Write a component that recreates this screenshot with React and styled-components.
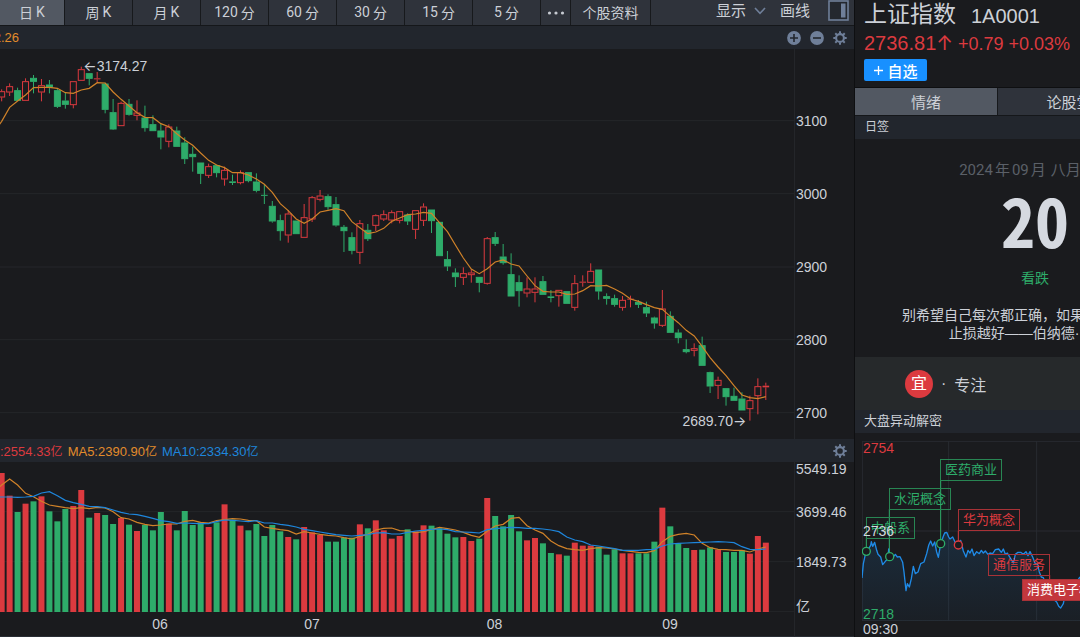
import React from "react";
import styled, { createGlobalStyle } from "styled-components";

const STEP = 23.88;
const START = 5;

// direction, high, body top, body bottom, low, volume top
const candles = [
  ["up", 118, 124, 142, 154, 114],
  ["up", 100, 109, 127, 138, 182],
  ["down", 113, 121, 152, 152, 231],
  ["up", 85, 94, 152, 152, 206],
  ["down", 75, 84, 95, 130, 199],
  ["up", 87, 106, 127, 154, 184],
  ["down", 90, 104, 112, 130, 229],
  ["down", 115, 121, 170, 174, 259],
  ["down", 127, 152, 164, 176, 222],
  ["up", 94, 94, 165, 175, 213],
  ["up", 50, 58, 92, 92, 165],
  ["down", 70, 70, 86, 106, 248],
  ["up", 66, 85, 88, 98, 234],
  ["down", 98, 101, 179, 190, 240],
  ["down", 147, 187, 238, 240, 267],
  ["up", 155, 159, 228, 228, 249],
  ["down", 147, 162, 194, 197, 269],
  ["up", 151, 188, 197, 211, 288],
  ["down", 167, 203, 234, 245, 270],
  ["down", 196, 223, 243, 243, 286],
  ["down", 222, 242, 262, 298, 231],
  ["up", 223, 230, 275, 292, 266],
  ["down", 230, 242, 290, 290, 286],
  ["down", 262, 278, 327, 342, 228],
  ["down", 290, 312, 321, 365, 270],
  ["down", 338, 338, 371, 402, 262],
  ["up", 341, 349, 377, 384, 276],
  ["down", 344, 346, 369, 382, 262],
  ["up", 350, 360, 388, 407, 208],
  ["down", 374, 394, 399, 405, 254],
  ["up", 361, 367, 399, 403, 272],
  ["down", 367, 367, 393, 397, 286],
  ["down", 370, 395, 422, 427, 267],
  ["down", 405, 435, 437, 462, 303],
  ["down", 453, 468, 514, 518, 270],
  ["down", 494, 511, 543, 572, 289],
  ["up", 480, 491, 556, 578, 306],
  ["down", 512, 512, 552, 552, 313],
  ["up", 462, 502, 563, 563, 276],
  ["up", 438, 442, 508, 516, 292],
  ["up", 420, 437, 449, 454, 300],
  ["down", 433, 439, 471, 479, 320],
  ["down", 441, 463, 526, 530, 320],
  ["down", 525, 531, 543, 606, 308],
  ["down", 547, 562, 602, 613, 308],
  ["up", 510, 520, 608, 642, 268],
  ["down", 522, 540, 567, 573, 280],
  ["up", 493, 496, 527, 543, 256],
  ["up", 481, 493, 508, 513, 286],
  ["up", 481, 487, 511, 520, 311],
  ["up", 484, 484, 512, 520, 303],
  ["down", 490, 494, 514, 525, 283],
  ["up", 481, 481, 539, 567, 289],
  ["up", 460, 470, 512, 528, 271],
  ["down", 479, 479, 513, 549, 272],
  ["down", 516, 516, 618, 618, 280],
  ["down", 603, 628, 649, 663, 296],
  ["down", 655, 668, 681, 711, 307],
  ["up", 652, 670, 683, 705, 306],
  ["up", 658, 668, 675, 698, 318],
  ["down", 681, 681, 698, 727, 311],
  ["up", 561, 565, 701, 704, 189],
  ["down", 546, 562, 581, 588, 243],
  ["down", 582, 620, 639, 644, 274],
  ["down", 610, 673, 739, 739, 240],
  ["down", 676, 697, 723, 770, 289],
  ["up", 682, 716, 730, 742, 316],
  ["up", 682, 716, 728, 757, 309],
  ["down", 678, 694, 734, 734, 325],
  ["down", 720, 739, 744, 757, 354],
  ["up", 720, 720, 738, 770, 358],
  ["down", 724, 724, 761, 761, 362],
  ["up", 675, 700, 773, 782, 323],
  ["up", 676, 695, 698, 710, 332],
  ["up", 640, 663, 698, 698, 332],
  ["down", 659, 659, 724, 749, 335],
  ["down", 730, 739, 746, 764, 359],
  ["down", 734, 745, 764, 770, 343],
  ["up", 738, 750, 773, 782, 355],
  ["up", 737, 746, 749, 772, 355],
  ["down", 750, 756, 764, 774, 355],
  ["down", 755, 772, 790, 801, 355],
  ["down", 800, 803, 820, 836, 320],
  ["up", 720, 776, 827, 831, 218],
  ["down", 784, 798, 848, 848, 274],
  ["down", 838, 848, 864, 880, 325],
  ["down", 868, 898, 906, 910, 339],
  ["up", 880, 895, 902, 919, 345],
  ["down", 860, 886, 947, 947, 344],
  ["down", 965, 967, 1009, 1029, 337],
  ["up", 980, 990, 1007, 1047, 344],
  ["down", 1015, 1015, 1041, 1067, 351],
  ["down", 1013, 1038, 1052, 1052, 351],
  ["down", 1027, 1046, 1081, 1081, 346],
  ["up", 1037, 1051, 1077, 1112, 356],
  ["up", 985, 1009, 1038, 1093, 303],
  ["up", 998, 1007, 1012, 1050, 323],
];

const priceAverage = [
  214, 172, 153, 135, 113, 112, 112, 115, 128, 130, 120, 115, 98, 99, 126, 148,
  168, 188, 202, 203, 221, 230, 251, 270, 286, 309, 331, 345, 353, 368, 368,
  375, 387, 403, 427, 461, 482, 507, 520, 507, 486, 481, 476, 482, 515, 533,
  551, 546, 535, 514, 504, 494, 492, 487, 490, 518, 545, 585, 624, 657, 671,
  656, 636, 630, 642, 648, 678, 707, 724, 726, 726, 733, 732, 722, 707, 708,
  706, 717, 730, 747, 754, 764, 773, 778, 799, 818, 841, 858, 889, 923, 951,
  977, 1007, 1035, 1043, 1046, 1040,
];

const volumeFive = [
  150, 132, 150, 175, 185, 199, 210, 214, 218, 221, 218, 221, 217, 219, 230,
  248, 252, 262, 268, 272, 270, 267, 267, 259, 256, 262, 264, 257, 254, 251,
  252, 256, 257, 276, 280, 284, 287, 297, 290, 294, 298, 301, 303, 308, 312,
  304, 298, 285, 280, 279, 287, 288, 293, 290, 284, 277, 281, 285, 292, 301,
  307, 289, 273, 268, 250, 247, 272, 285, 295, 318, 332, 341, 344, 346, 341,
  338, 339, 342, 346, 349, 352, 353, 347, 320, 304, 298, 295, 300, 325, 338,
  343, 344, 346, 346, 351, 342, 336,
];

const volumeTen = [
  186, 186, 187, 186, 184, 174, 170, 182, 196, 203, 208, 214, 215, 218, 225,
  232, 237, 239, 244, 250, 257, 260, 265, 264, 265, 266, 266, 260, 255, 256,
  258, 260, 257, 264, 264, 268, 271, 276, 283, 287, 291, 295, 299, 301, 303,
  301, 299, 294, 293, 297, 297, 292, 288, 286, 283, 282, 284, 290, 291, 292,
  294, 284, 281, 279, 277, 278, 280, 280, 282, 285, 290, 306, 315, 320, 330,
  333, 337, 341, 346, 346, 346, 344, 343, 333, 327, 325, 324, 323, 322, 321,
  320, 321, 323, 335, 343, 344, 342,
];

const intraday =
  "36,443 40,400 46,372 49,362 56,355 62,345 64,334 68,348 74,336 80,360 84,372 92,380 98,403 106,393 114,385 116,356 120,378 128,382 136,372 142,380 150,379 158,396 162,425 168,481 172,460 178,470 184,445 190,408 196,430 204,425 212,400 222,395 230,370 236,345 242,332 248,347 254,335 260,365 265,381 270,352 272,340 280,318 284,308 290,306 296,320 300,326 308,320 314,333 320,343 325,344 332,330 340,362 348,380 354,360 360,368 366,356 372,376 380,364 388,370 394,360 400,368 406,362 414,372 420,368 428,370 436,358 446,356 454,366 460,356 466,372 472,368 478,378 490,398 496,372 504,366 512,366 520,372 528,364 534,376 540,364 548,380 556,400 562,400 568,425 574,440 580,442 590,470 600,495 612,508 620,515 626,528 632,533 640,520 644,500 650,495 656,498 662,470 665,460 672,466 690,440";

const periods = [
  ["日", "K"],
  ["周", "K"],
  ["月", "K"],
  ["120", "分"],
  ["60", "分"],
  ["30", "分"],
  ["15", "分"],
  ["5", "分"],
];

const colors = {
  up: "#dc3a3f",
  down: "#2eac6a",
  orange: "#d08229",
  blue: "#1e86dc",
  grid: "#24262a",
  icon: "#6f7f99",
};

const tagBorders = {
  up: "#a83237",
  down: "#288653",
};

const xAt = (i) => START + STEP * i;

const toPoints = (values) =>
  values.map((value, i) => `${xAt(i).toFixed(1)},${value}`).join(" ");

const Gear = () => (
  <svg width="14" height="14" viewBox="0 0 14 14" aria-hidden="true">
    <g stroke={colors.icon} fill="none">
      <circle cx="7" cy="7" r="3.9" strokeWidth="2.1" />
      {[0, 45, 90, 135, 180, 225, 270, 315].map((angle) => (
        <path
          key={angle}
          d="M7 0.3V2.6"
          strokeWidth="2"
          transform={`rotate(${angle} 7 7)`}
        />
      ))}
    </g>
  </svg>
);

const Round = ({ plus }) => (
  <svg width="14" height="14" viewBox="0 0 14 14" aria-hidden="true">
    <circle cx="7" cy="7" r="6.9" fill={colors.icon} />
    <path
      d={plus ? "M3 7H11M7 3V11" : "M3 7H11"}
      stroke="#22262d"
      strokeWidth="1.6"
    />
  </svg>
);

const Toolbar = () => (
  <ToolbarRow>
    {periods.map(([first, second], i) => (
      <PeriodButton key={first} $active={i === 0}>
        <span>{first}</span>
        <span>{second}</span>
      </PeriodButton>
    ))}
    <MoreButton aria-label="更多">
      <svg width="18" height="4" viewBox="0 0 18 4">
        <g fill="#c6cad1">
          <circle cx="2.5" cy="2" r="1.6" />
          <circle cx="9" cy="2" r="1.6" />
          <circle cx="15.5" cy="2" r="1.6" />
        </g>
      </svg>
    </MoreButton>
    <InfoButton>个股资料</InfoButton>
    <Tools>
      <ToolButton>
        显示
        <svg width="12" height="8" viewBox="0 0 12 8">
          <path
            d="M1 1L6 6.4L11 1"
            fill="none"
            stroke={colors.icon}
            strokeWidth="1.6"
          />
        </svg>
      </ToolButton>
      <ToolButton>画线</ToolButton>
      <ToolButton aria-label="侧栏">
        <svg width="21" height="21" viewBox="0 0 21 21">
          <rect
            x="1"
            y="1"
            width="19"
            height="19"
            fill="#24282f"
            stroke={colors.icon}
            strokeWidth="1.6"
          />
          <rect x="13" y="3.5" width="4.5" height="14" fill={colors.icon} />
        </svg>
      </ToolButton>
    </Tools>
  </ToolbarRow>
);

const PriceChart = () => (
  <PlotRow>
    <PlotArea>
      <PlotSvg viewBox="0 -3 2382 1170" preserveAspectRatio="none" $height={390}>
        {[212, 431, 651, 869, 1088].map((y) => (
          <path key={y} d={`M0 ${y}H2382`} stroke={colors.grid} strokeWidth="3" />
        ))}
        {candles.map(([dir, high, top, bottom, low], i) => {
          const x = xAt(i);
          const color = colors[dir];
          const tall = bottom - top > 5;
          return (
            <g key={i} stroke={color} strokeWidth="3">
              <path d={`M${x} ${high}V${top}M${x} ${bottom}V${low}`} />
              {tall ? (
                <rect
                  x={x - 9}
                  y={top + 1}
                  width="18"
                  height={bottom - top - 2}
                  fill={dir === "up" ? "none" : color}
                />
              ) : (
                <path
                  d={`M${x - 10} ${(top + bottom) / 2}H${x + 10}`}
                  strokeWidth={Math.max(3, bottom - top)}
                />
              )}
            </g>
          );
        })}
        <polyline
          points={`-20,250 ${toPoints(priceAverage)}`}
          fill="none"
          stroke={colors.orange}
          strokeWidth="3.6"
        />
      </PlotSvg>
      <HighMark>
        <i>←</i>3174.27
      </HighMark>
      <LowMark>
        2689.70<i>→</i>
      </LowMark>
    </PlotArea>
    <PriceAxis>
      {[3100, 3000, 2900, 2800, 2700].map((price) => (
        <span key={price}>{price}</span>
      ))}
    </PriceAxis>
  </PlotRow>
);

const VolumeChart = () => (
  <PlotRow>
    <PlotArea>
      <PlotSvg viewBox="0 81 2382 450" preserveAspectRatio="none" $height={150}>
        {[230, 380, 530].map((y) => (
          <path key={y} d={`M0 ${y}H2382`} stroke={colors.grid} strokeWidth="3" />
        ))}
        {candles.map((candle, i) => (
          <rect
            key={i}
            x={xAt(i) - 9}
            y={candle[5]}
            width="18"
            height={531 - candle[5]}
            fill={colors[candle[0]]}
          />
        ))}
        <polyline
          points={`-20,172 ${toPoints(volumeFive)}`}
          fill="none"
          stroke={colors.orange}
          strokeWidth="3.6"
        />
        <polyline
          points={`-20,186 ${toPoints(volumeTen)}`}
          fill="none"
          stroke={colors.blue}
          strokeWidth="3.6"
        />
      </PlotSvg>
      <Months>
        <span />
        <span>06</span>
        <span>07</span>
        <span>08</span>
        <span>09</span>
      </Months>
    </PlotArea>
    <VolumeAxis>
      <span>5549.19</span>
      <span>3699.46</span>
      <span>1849.73</span>
      <span>亿</span>
    </VolumeAxis>
  </PlotRow>
);

const Intraday = () => (
  <IntradayBox>
    <IntradaySvg viewBox="36 32 654 540">
      <defs>
        <linearGradient id="fade" x1="0" y1="0" x2="0" y2="1">
          <stop offset="0" stopColor="#1e86dc" stopOpacity="0.16" />
          <stop offset="1" stopColor="#1e86dc" stopOpacity="0.04" />
        </linearGradient>
      </defs>
      <path
        d="M36 33H690M36 302H690M36 571H690M37 32V572M296 32V572M560 32V572"
        stroke="#282b31"
        strokeWidth="3"
      />
      <polygon points={`36,572 ${intraday} 690,572`} fill="url(#fade)" />
      <polyline
        points={intraday}
        fill="none"
        stroke="#1f8ae6"
        strokeWidth="4"
        strokeLinejoin="round"
      />
      <g stroke={colors.down} strokeWidth="4" fill="#1a1b1e">
        <path d="M49 322V352M118 236V367M272 152V328" strokeWidth="3" />
        <circle cx="49" cy="363" r="12" />
        <circle cx="119" cy="379" r="12" />
        <circle cx="272" cy="340" r="12" />
      </g>
      <g stroke={colors.up} strokeWidth="4" fill="#1a1b1e">
        <path d="M325 301V332M599 434V447" strokeWidth="3" />
        <circle cx="325" cy="344" r="12" />
      </g>
    </IntradaySvg>
    <Tag $x={4} $y={76} $tone="down">中船系</Tag>
    <Tag $x={27} $y={47} $tone="down">水泥概念</Tag>
    <Tag $x={78} $y={18} $tone="down">医药商业</Tag>
    <Tag $x={96} $y={68} $tone="up">华为概念</Tag>
    <Tag $x={126} $y={113} $tone="up">通信服务</Tag>
    <Tag $x={160} $y={138} $tone="up" $filled>消费电子概念</Tag>
    <Levels>
      <Level $color={colors.up}>2754</Level>
      <Level $color="#d3d7de">2736</Level>
      <Level $color={colors.down}>2718</Level>
    </Levels>
    <Clock>09:30</Clock>
  </IntradayBox>
);

const App = () => {
  return (
    <>
      <GlobalStyle />
      <Page>
        <Main>
          <Toolbar />
          <Strip>
            <Clip>2.26</Clip>
            <StripIcons>
              <IconButton aria-label="放大">
                <Round plus />
              </IconButton>
              <IconButton aria-label="缩小">
                <Round />
              </IconButton>
              <IconButton aria-label="设置">
                <Gear />
              </IconButton>
            </StripIcons>
          </Strip>
          <PriceChart />
          <Strip>
            <Legend>
              <Figure $color={colors.up}>
                :2554.33<small>亿</small>
              </Figure>
              <Figure $color="#e28c2b">
                MA5:2390.90<small>亿</small>
              </Figure>
              <Figure $color={colors.blue}>
                MA10:2334.30<small>亿</small>
              </Figure>
            </Legend>
            <StripIcons>
              <IconButton aria-label="设置">
                <Gear />
              </IconButton>
            </StripIcons>
          </Strip>
          <VolumeChart />
        </Main>
        <Side>
          <SideInner>
            <StockHead>
              <h1>
                上证指数 <span>1A0001</span>
              </h1>
              <Quote>
                <strong>
                  2736.81<i>↑</i>
                </strong>
                <span>+0.79</span>
                <span>+0.03%</span>
              </Quote>
              <AddButton>
                <svg width="11" height="11" viewBox="0 0 11 11">
                  <path
                    d="M1 5.5H10M5.5 1V10"
                    stroke="#fff"
                    strokeWidth="1.3"
                  />
                </svg>
                自选
              </AddButton>
            </StockHead>
            <SideTabs>
              <SideTab $active>情绪</SideTab>
              <SideTab>论股堂</SideTab>
            </SideTabs>
            <SideTitle>日签</SideTitle>
            <Daily>
              <MonthLine>
                <span>2024</span>年<span>09</span>月
                <span>八月十八</span>
              </MonthLine>
              <Day>20</Day>
              <Mood>看跌</Mood>
              <p>
                别希望自己每次都正确，如果犯了错，越快
                <br />
                止损越好——伯纳德·巴鲁克
              </p>
            </Daily>
            <Advice>
              <Badge>宜</Badge>
              <span>·</span>
              <span>专注</span>
            </Advice>
            <SideTitle $large>大盘异动解密</SideTitle>
            <Intraday />
          </SideInner>
        </Side>
      </Page>
    </>
  );
};

const GlobalStyle = createGlobalStyle`
  *, *::before, *::after {
    box-sizing: border-box;
  }
  body {
    margin: 0;
    background: #1a1b1e;
    color: #ccd0d7;
    font-family: "Liberation Sans", "Noto Sans CJK SC", sans-serif;
    font-size: 14px;
    overflow: hidden;
  }
  button {
    border: 0;
    padding: 0;
    background: none;
    color: inherit;
    font-family: Roboto, "Noto Sans CJK SC", sans-serif;
    font-size: 14px;
    cursor: pointer;
  }
  svg {
    display: block;
  }
  i {
    font-family: Inter, sans-serif;
    font-style: normal;
  }
`;

const Page = styled.div`
  display: grid;
  grid-template-columns: minmax(0, 1fr) 225px;
  min-height: 100vh;
`;

const Main = styled.main`
  display: flex;
  flex-direction: column;
  min-width: 0;
  border-right: 1px solid #0e0f11;
`;

const ToolbarRow = styled.nav`
  display: flex;
  height: 26px;
  background: #2f333b;
  border-bottom: 1px solid #15171a;
`;

const PeriodButton = styled.button`
  display: flex;
  align-items: center;
  justify-content: center;
  gap: 3px;
  width: 68px;
  padding-bottom: 2px;
  border-right: 1px solid #17191c;
  background: ${(props) => (props.$active ? "#525862" : "transparent")};
  &:first-child {
    width: 65px;
  }
`;

const MoreButton = styled.button`
  display: flex;
  align-items: center;
  justify-content: center;
  width: 30px;
  border-right: 1px solid #17191c;
`;

const InfoButton = styled.button`
  width: 80px;
  padding-bottom: 2px;
  border-right: 1px solid #17191c;
`;

const Tools = styled.div`
  display: flex;
  align-items: flex-start;
  gap: 14px;
  margin-left: auto;
  padding-right: 5px;
`;

const ToolButton = styled.button`
  display: flex;
  align-items: center;
  gap: 8px;
  font-size: 15px;
  line-height: 22px;
  &:last-child {
    margin-left: 4px;
  }
`;

const Strip = styled.div`
  display: flex;
  align-items: center;
  justify-content: space-between;
  flex: none;
  height: 23px;
  padding-right: 7px;
  background: #22262d;
  font-size: 13px;
`;

const Clip = styled.span`
  display: flex;
  justify-content: flex-end;
  width: 19px;
  overflow: hidden;
  color: #e28c2b;
`;

const StripIcons = styled.div`
  display: flex;
  gap: 9px;
`;

const IconButton = styled.button`
  display: flex;
`;

const Legend = styled.div`
  display: flex;
  gap: 5px;
`;

const Figure = styled.span`
  color: ${(props) => props.$color};
  small {
    font-size: 12px;
  }
`;

const PlotRow = styled.section`
  display: flex;
`;

const PlotArea = styled.div`
  position: relative;
  flex: 1;
  min-width: 0;
`;

const PlotSvg = styled.svg`
  width: 100%;
  height: ${(props) => props.$height}px;
`;

const Mark = styled.span`
  position: absolute;
  display: flex;
  align-items: center;
  line-height: 16px;
`;

const HighMark = styled(Mark)`
  top: 9px;
  left: 10.5%;
`;

const LowMark = styled(Mark)`
  right: 6%;
  bottom: 10px;
`;

const Axis = styled.div`
  display: grid;
  width: 60px;
  padding-left: 1px;
  border-left: 1px solid #24262a;
  line-height: 14px;
  align-items: center;
`;

const PriceAxis = styled(Axis)`
  grid-auto-rows: 73px;
  height: 390px;
  padding-top: 35px;
  overflow: hidden;
`;

const VolumeAxis = styled(Axis)`
  grid-template-rows: 14px 72px 28px 60px;
  border-bottom: 1px solid #292d34;
`;

const Months = styled.div`
  display: grid;
  grid-template-columns: 84fr 152fr 152fr 213fr 138fr 55fr;
  border-bottom: 1px solid #292d34;
  line-height: 24px;
  text-align: center;
`;

const Side = styled.aside`
  min-width: 0;
  overflow: hidden;
`;

const SideInner = styled.div`
  width: 360px;
`;

const StockHead = styled.header`
  height: 88px;
  padding-left: 9px;
  border-bottom: 1px solid #0e0f11;
  h1 {
    display: flex;
    gap: 15px;
    height: 29px;
    margin: 0;
    font-size: 23px;
    font-weight: 400;
    line-height: 29px;
  }
  h1 span {
    font-size: 20px;
    line-height: 32px;
  }
`;

const Quote = styled.div`
  display: flex;
  align-items: baseline;
  gap: 5px;
  height: 30px;
  color: ${colors.up};
  font-size: 18px;
  line-height: 29px;
  strong {
    font-size: 20px;
    font-weight: 400;
  }
`;

const AddButton = styled.button`
  display: flex;
  align-items: center;
  justify-content: center;
  gap: 3px;
  width: 63px;
  height: 22px;
  border-radius: 2px;
  background: #1890ff;
  color: #fff;
  font-size: 15px;
  font-weight: 500;
`;

const SideTabs = styled.nav`
  display: flex;
  height: 28px;
  border-bottom: 1px solid #15171a;
`;

const SideTab = styled.button`
  flex: none;
  width: 143px;
  border-right: 1px solid #17191c;
  background: ${(props) => (props.$active ? "#525862" : "#2f333b")};
  font-size: 15px;
`;

const SideTitle = styled.h2`
  height: 23px;
  margin: 0;
  padding-left: ${(props) => (props.$large ? 9 : 10)}px;
  background: #22262d;
  font-size: ${(props) => (props.$large ? 13 : 12)}px;
  font-weight: 400;
  line-height: 22px;
`;

const Daily = styled.section`
  padding: 20px 0 15px;
  text-align: center;
  p {
    margin: 18px 0 0;
    line-height: 18px;
  }
`;

const MonthLine = styled.div`
  display: flex;
  justify-content: center;
  gap: 2px;
  color: #5b6068;
  font-family: Roboto, "Noto Sans CJK SC", sans-serif;
  font-size: 15px;
  line-height: 22px;
  span:last-child {
    margin-left: 3px;
  }
`;

const Day = styled.div`
  margin-top: 3px;
  color: #d5d9e0;
  font-family: "Noto Sans CJK SC", sans-serif;
  font-feature-settings: "hwid";
  font-size: 68px;
  font-weight: 700;
  line-height: 70px;
`;

const Mood = styled.div`
  margin-top: 14px;
  color: ${colors.down};
  line-height: 20px;
`;

const Advice = styled.section`
  display: flex;
  align-items: center;
  gap: 8px;
  height: 53px;
  padding-left: 50px;
  background: #26292b;
  font-size: 16px;
`;

const Badge = styled.b`
  width: 28px;
  height: 28px;
  border-radius: 50%;
  background: ${colors.up};
  color: #fff;
  font-size: 16px;
  font-weight: 400;
  line-height: 27px;
  text-align: center;
`;

const IntradayBox = styled.section`
  position: relative;
  margin: 8px 0 0 7px;
`;

const IntradaySvg = styled.svg`
  width: 218px;
  height: 180px;
`;

const Tag = styled.span`
  position: absolute;
  left: ${(props) => props.$x}px;
  top: ${(props) => props.$y}px;
  padding: 0 4px;
  border: 1px solid ${(props) => tagBorders[props.$tone]};
  background: ${(props) => (props.$filled ? "#c4373d" : "transparent")};
  color: ${(props) => (props.$filled ? "#fff" : colors[props.$tone])};
  font-size: 13px;
  line-height: 20px;
  white-space: nowrap;
`;

const Levels = styled.div`
  position: absolute;
  inset: 0 auto auto 1px;
  display: flex;
  flex-direction: column;
  justify-content: space-between;
  height: 180px;
  line-height: 14px;
`;

const Level = styled.span`
  color: ${(props) => props.$color};
`;

const Clock = styled.div`
  padding-left: 1px;
  line-height: 16px;
`;

export default App;
